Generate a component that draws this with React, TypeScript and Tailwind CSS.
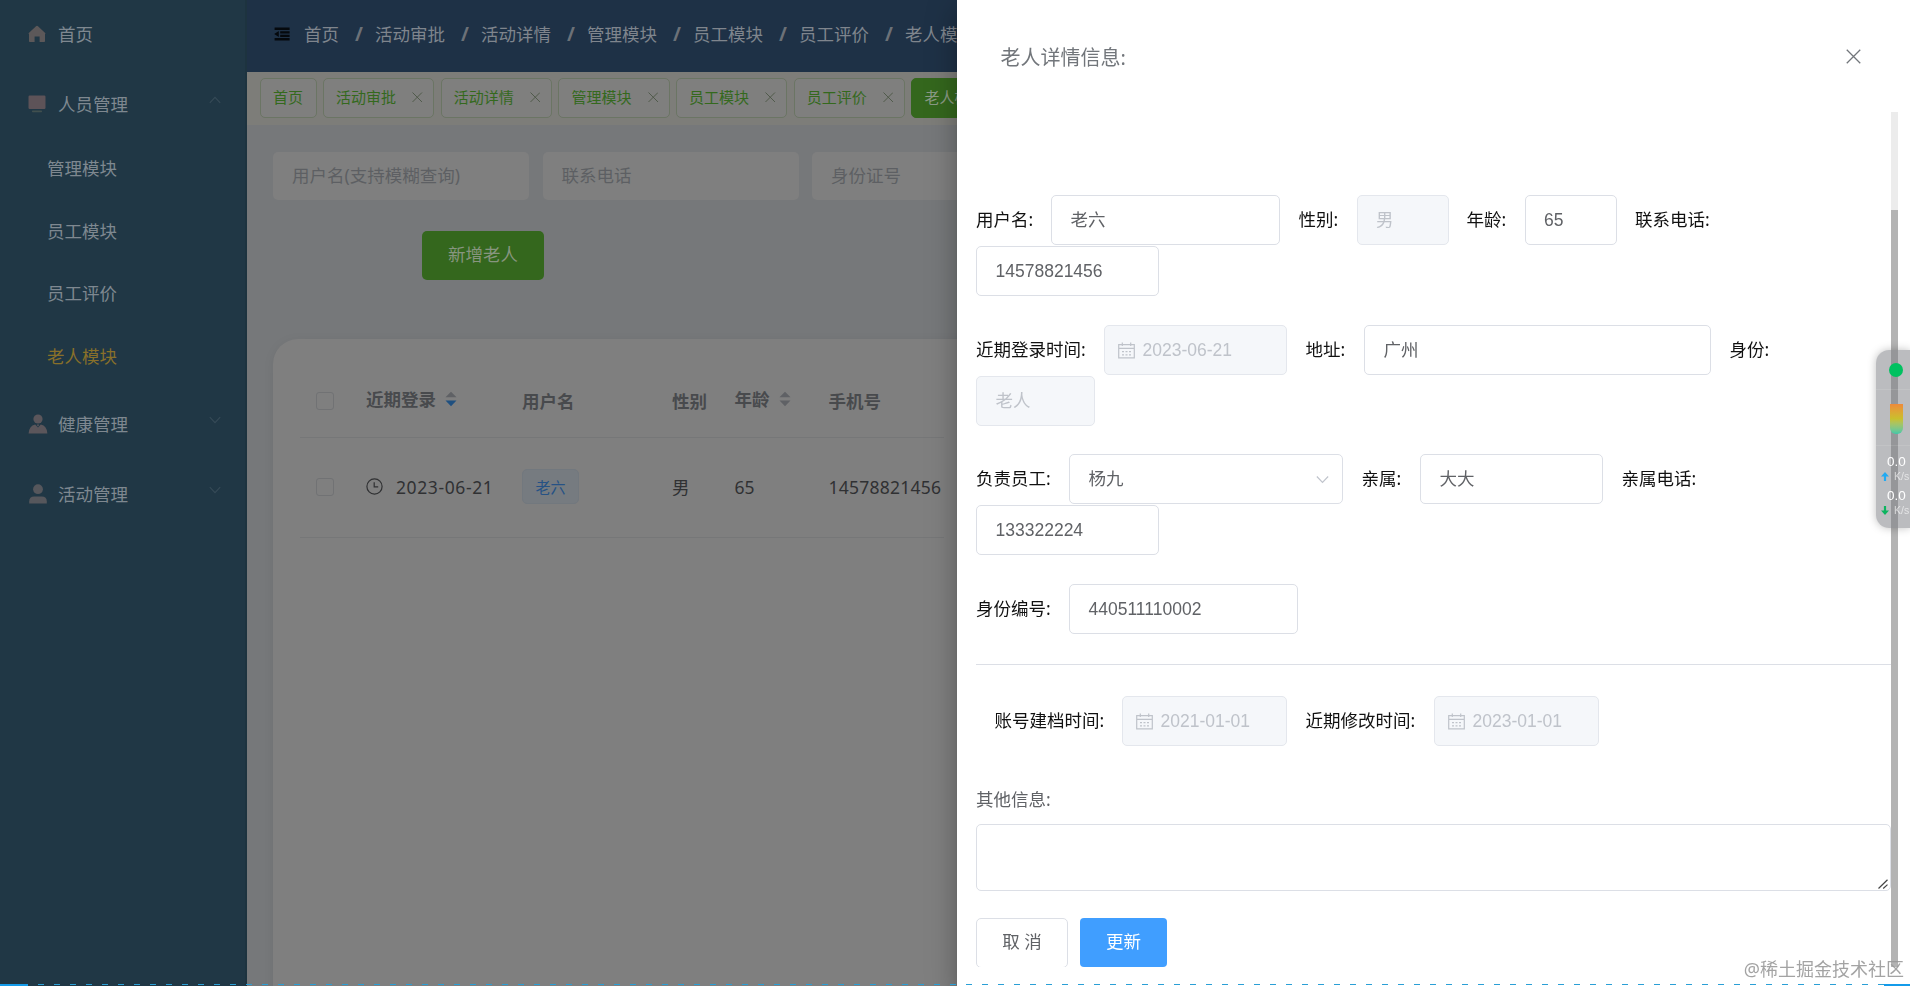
import type { ReactNode } from 'react';
import clsx from 'clsx';

const crumbs = ['首页', '活动审批', '活动详情', '管理模块', '员工模块', '员工评价', '老人模块'];

const ChevronIcon = ({ className }: { className?: string }) => (
  <svg viewBox="0 0 12 8" className={className} fill="none" stroke="currentColor" strokeWidth="1.1">
    <path d="M0.8 1.2 L6 6.6 L11.2 1.2" />
  </svg>
);

const CloseIcon = ({ className }: { className?: string }) => (
  <svg viewBox="0 0 16 16" className={className} fill="none" stroke="currentColor" strokeWidth="1.4">
    <path d="M0.8 0.8 L15.2 15.2 M15.2 0.8 L0.8 15.2" />
  </svg>
);

const CalendarIcon = () => (
  <svg viewBox="0 0 17 17" className="h-[17px] w-[17px] shrink-0" fill="none" stroke="currentColor" strokeWidth="1.2">
    <path d="M0.7 2.6 H16.3 V15.9 H0.7 Z M0.7 6.4 H16.3 M4.3 0.4 V4 M12.7 0.4 V4" />
    <path d="M4 9.6 H6 M7.5 9.6 H9.5 M11 9.6 H13 M4 12.8 H6 M7.5 12.8 H9.5 M11 12.8 H13" />
  </svg>
);

const HomeIcon = () => (
  <svg viewBox="0 0 18 18" className="h-[18px] w-[18px]" fill="currentColor">
    <path d="M9 0.8 Q9.6 0.8 10 1.3 L17.2 8 Q17.8 9 17 9.2 V16.2 Q17 17 16.2 17 H11.6 V11.4 H6.6 V17 H1.8 Q1 17 1 16.2 V9.2 Q0.2 9 0.8 8 L8 1.3 Q8.4 0.8 9 0.8 Z" />
  </svg>
);

const PlatformIcon = () => (
  <svg viewBox="0 0 18 18" className="h-[18px] w-[18px]" fill="currentColor">
    <rect x="0.5" y="0.5" width="17" height="13.4" rx="1.2" />
    <rect x="4" y="15.4" width="10" height="1.8" rx="0.6" className="text-[#41504f]" />
  </svg>
);

const CustomIcon = () => (
  <svg viewBox="0 0 20 20" className="h-5 w-5" fill="currentColor">
    <circle cx="10" cy="5" r="4.6" />
    <path d="M0.6 19.6 Q1 12 7.2 10.6 L10 13.6 L12.8 10.6 Q19 12 19.4 19.6 Z" />
    <path d="M9 10.6 H11 L10.6 12.2 H9.4 Z" />
  </svg>
);

const UserIcon = () => (
  <svg viewBox="0 0 20 20" className="h-5 w-5" fill="currentColor">
    <circle cx="10" cy="5.2" r="4.9" />
    <path d="M1.2 19.4 V17.4 Q1.2 12.4 6.2 12.4 H13.8 Q18.8 12.4 18.8 17.4 V19.4 Z" />
  </svg>
);

const SortIcon = ({ active }: { active?: boolean }) => (
  <svg viewBox="0 0 12 16" className="h-4 w-3">
    <path d="M0.5 6.2 L6 0.8 L11.5 6.2 Z" fill="#5f6165" />
    <path d="M0.5 9.4 L6 15.2 L11.5 9.4 Z" fill={active ? '#1f5080' : '#5f6165'} />
  </svg>
);

const menuRow = 'flex h-[70px] items-center pb-[2px] pl-[27px]';

const Sidebar = () => (
  <aside className="w-[247px] shrink-0 border-r-2 border-[#1d333f] bg-[#203745] text-[#7e8890]">
    <div className={menuRow}>
      <span className="flex w-[31px] pl-[1px] text-[#5c5859]"><HomeIcon /></span>
      首页
    </div>
    <div className={menuRow}>
      <span className="flex w-[31px] pl-[1px] text-[#5d5358]"><PlatformIcon /></span>
      人员管理
      <ChevronIcon className="-mt-2 ml-auto mr-[24px] h-2 w-3 rotate-180 text-[#364a57]" />
    </div>
    <ul className="h-[250px] pl-[47px]">
      {['管理模块', '员工模块', '员工评价', '老人模块'].map((name) => (
        <li
          key={name}
          className={clsx('flex h-[62.5px] items-center pb-[6px]', name === '老人模块' && 'text-[#88702a]')}
        >
          {name}
        </li>
      ))}
    </ul>
    <div className={menuRow}>
      <span className="flex w-[31px] pl-[1px] text-[#5b565b]"><CustomIcon /></span>
      健康管理
      <ChevronIcon className="-mt-2 ml-auto mr-[24px] h-2 w-3 text-[#364a57]" />
    </div>
    <div className={menuRow}>
      <span className="flex w-[31px] pl-[1px] text-[#56575c]"><UserIcon /></span>
      活动管理
      <ChevronIcon className="-mt-2 ml-auto mr-[24px] h-2 w-3 text-[#364a57]" />
    </div>
  </aside>
);

const Header = () => (
  <header className="flex h-[72px] items-center bg-[#1e3146] pb-[5px] pl-[27px] whitespace-nowrap text-[#7f858d]">
    <svg viewBox="0 0 16 14" className="h-[14px] w-4" fill="#05090d">
      <path d="M0.6 0.6 H15.6 V3 H0.6 Z M6.2 4.2 H15.6 V6.4 H6.2 Z M6.2 7.8 H15.6 V10 H6.2 Z M0.6 11 H15.6 V13.4 H0.6 Z M0.2 7 L4.8 4 V10 Z" />
    </svg>
    <div className="ml-[14px] flex items-center">
      {crumbs.map((name, i) => (
        <div key={name} className="flex items-center">
          {i > 0 && <span className="w-[36px] pl-1 text-center text-[19px] font-bold text-[#6c7178]">/</span>}
          {name}
        </div>
      ))}
    </div>
  </header>
);

const TagsBar = () => (
  <div className="flex h-[53px] gap-[6.5px] bg-[#7d7d79] pt-[6px] pl-[13px] text-[15px] whitespace-nowrap">
    {crumbs.map((name, i) => (
      <div
        key={name}
        className={clsx(
          'flex h-10 shrink-0 items-center rounded-[5px] border pb-[3px] pl-[12px]',
          i > 0 ? 'w-[111.2px]' : 'w-[56.5px]',
          name === '老人模块'
            ? 'border-[#34671d] bg-[#34671d] text-[#8b9a85]'
            : 'border-[#6b7564] bg-[#7f7f7e] text-[#34691d]'
        )}
      >
        {name}
        {i > 0 && <CloseIcon className="mt-[2px] mr-[10.5px] ml-auto h-[10.5px] w-[10.5px] text-[#4c5747]" />}
      </div>
    ))}
  </div>
);

const SearchBox = ({ text }: { text: string }) => (
  <div className="flex h-12 w-[256px] shrink-0 items-center rounded-[5px] bg-[#7f7f7f] pb-[2px] pl-[19px] text-[#5d5f63]">
    {text}
  </div>
);

const columns = 'grid grid-cols-[66px_156px_150px_62.5px_94px_115.5px] items-center';
const Checkbox = () => <span className="ml-4 h-[18px] w-[18px] rounded-[3px] border border-[#717274]" />;

const TableCard = () => (
  <section className="ml-[26px] mt-[59px] h-[700px] w-[1600px] rounded-[25px] bg-[#7f7f7f] pt-[25px] pl-[27px] shadow-[0_2px_12px_rgba(0,0,0,0.06)]">
    <div className="w-[644px]">
      <div className={clsx(columns, 'h-[74px] border-b border-[#767778] font-bold text-[#484a4d]')}>
        <Checkbox />
        <span className="flex items-center gap-[9px] pb-[4px]">近期登录<SortIcon active /></span>
        <span>用户名</span>
        <span>性别</span>
        <span className="flex items-center gap-[9px] pb-[4px]">年龄<SortIcon /></span>
        <span>手机号</span>
      </div>
      <div className={clsx(columns, 'h-[100px] border-b border-[#767778] pb-[2px] text-[#303133]')}>
        <Checkbox />
        <span className="flex items-center">
          <svg viewBox="0 0 17 17" className="mr-[13px] h-[17px] w-[17px]" fill="none" stroke="currentColor" strokeWidth="1.2">
            <circle cx="8.5" cy="8.5" r="7.6" />
            <path d="M8.2 4.2 V8.8 H12.2" />
          </svg>
          <span className="tracking-[0.6px]">2023-06-21</span>
        </span>
        <span className="flex h-[35px] w-[57px] items-center justify-center rounded-[5px] border border-[#72787e] bg-[#767b80] text-[15px] text-[#265285]">
          老六
        </span>
        <span>男</span>
        <span>65</span>
        <span className="tracking-[0.25px]">14578821456</span>
      </div>
    </div>
  </section>
);

const Label = ({ className, children }: { className: string; children: ReactNode }) => (
  <label className={clsx('shrink-0 text-[#111]', className)}>{children}</label>
);

interface FieldProps {
  className: string;
  disabled?: boolean;
  date?: boolean;
  children: ReactNode;
}

const Field = ({ className, disabled, date, children }: FieldProps) => (
  <div
    className={clsx(
      'flex h-[50px] shrink-0 items-center rounded-[5px] border font-["Liberation_Sans","Noto_Sans_CJK_SC",sans-serif]',
      disabled ? 'border-[#e4e7ed] bg-[#f5f7fa] text-[#bfc3ca]' : 'border-[#dcdfe6] bg-white text-[#606266]',
      date ? 'gap-[8px] pl-[12.5px]' : 'pl-[18.5px]',
      className
    )}
  >
    {date && <CalendarIcon />}
    {children}
  </div>
);

const Line = ({ children }: { children: ReactNode }) => (
  <div className="flex h-[51px] items-start leading-[48.5px]">{children}</div>
);

const Drawer = () => (
  <div className="fixed inset-y-0 right-0 w-[953px] bg-white shadow-[0_8px_10px_-5px_rgba(0,0,0,0.2),0_16px_24px_2px_rgba(0,0,0,0.14),0_6px_30px_5px_rgba(0,0,0,0.12)]">
    <div className="flex h-[112px] items-center justify-between pr-[49px] pl-[43.5px] text-xl text-[#72767b]">
      <span className="pt-[4px]">老人详情信息:</span>
      <CloseIcon className="h-[15px] w-[15px]" />
    </div>

    <div className="flex h-[855px] overflow-hidden">
      <div className="w-[934px] pt-[83px] pl-[19px] whitespace-nowrap">
        <div className="mb-[28px]">
          <Line>
            <Label className="w-[75px]">用户名:</Label>
            <Field className="w-[229px]">老六</Field>
            <Label className="ml-[18.5px] w-[58px]">性别:</Label>
            <Field className="w-[92px]" disabled>男</Field>
            <Label className="ml-[18px] w-[58px]">年龄:</Label>
            <Field className="w-[92px]">65</Field>
            <Label className="ml-[18.5px]">联系电话:</Label>
          </Line>
          <Line>
            <Field className="w-[183px]">14578821456</Field>
          </Line>
        </div>

        <div className="mb-[27px]">
          <Line>
            <Label className="w-[128px]">近期登录时间:</Label>
            <Field className="w-[183px]" disabled date>2023-06-21</Field>
            <Label className="ml-[18.5px] w-[58.5px]">地址:</Label>
            <Field className="w-[347px]">广州</Field>
            <Label className="ml-[18.5px]">身份:</Label>
          </Line>
          <Line>
            <Field className="w-[119px]" disabled>老人</Field>
          </Line>
        </div>

        <div className="mb-[28px]">
          <Line>
            <Label className="w-[93px]">负责员工:</Label>
            <Field className="w-[274px]">
              杨九
              <ChevronIcon className="mr-[13px] ml-auto h-[9px] w-[13px] text-[#c0c4cc]" />
            </Field>
            <Label className="ml-[18.5px] w-[58.5px]">亲属:</Label>
            <Field className="w-[183px]">大大</Field>
            <Label className="ml-[18.5px]">亲属电话:</Label>
          </Line>
          <Line>
            <Field className="w-[183px]">133322224</Field>
          </Line>
        </div>

        <Line>
          <Label className="w-[93px]">身份编号:</Label>
          <Field className="w-[229px]">440511110002</Field>
        </Line>

        <hr className="mt-[29px] mb-[31px] border-[#dcdfe6]" />

        <div className="pl-[18.5px]">
          <Line>
            <Label className="w-[127.5px]">账号建档时间:</Label>
            <Field className="w-[165px]" disabled date>2021-01-01</Field>
            <Label className="ml-[18.5px] w-[128.5px]">近期修改时间:</Label>
            <Field className="w-[165px]" disabled date>2023-01-01</Field>
          </Line>
        </div>

        <div className="mt-[28px] h-[49px] leading-[49px] text-[#606266]">其他信息:</div>
        <div className="flex h-[67px] items-end justify-end rounded-[5px] border border-[#dcdfe6]">
          <svg viewBox="0 0 10 10" className="mr-[2px] mb-[1px] h-[10px] w-[10px]" stroke="#444" strokeWidth="1.2">
            <path d="M0.5 9.5 L9.5 0.8 M5.2 9.5 L9.5 5.6" />
          </svg>
        </div>

        <div className="mt-[27px] flex gap-3">
          <button className="h-[50px] w-[92px] rounded-[5px] border border-[#dcdfe6] pb-[4px] text-[#606266]">取 消</button>
          <button className="h-[49px] w-[87px] rounded-[4px] bg-[#409eff] pb-[3px] text-white">更新</button>
        </div>
      </div>
      {/* scrollbar */}
      <div className="w-[7px] bg-[#ececec] pt-[98px]">
        <div className="h-full bg-[#b3b3b3]" />
      </div>
    </div>
  </div>
);

// desktop network speed widget docked to the right edge
const SpeedWidget = () => (
  <div className='fixed top-[350px] right-0 h-[178px] w-[34px] overflow-hidden rounded-l-[13px] bg-[#777a80]/50 font-["Liberation_Sans",sans-serif] text-white shadow-[0_0_8px_rgba(0,0,0,0.25)]'>
    <div className="flex h-10 items-center border-b border-white/10 pl-[13px]">
      <span className="h-[14px] w-[14px] rounded-full bg-[#00c160]" />
    </div>
    <div className="h-14 border-b border-white/10 pt-[14px] pl-[14px]">
      <div className="h-[30px] w-[13px] rounded-b-[6px] bg-linear-to-b from-[#ee8a3a] via-[#c8c02c] to-[#3cc8a8]" />
    </div>
    {['up', 'down'].map((dir) => (
      <div key={dir} className="h-[34px] pt-[8px] whitespace-nowrap">
        <div className="pl-[11px] text-[13.5px] leading-4">0.0</div>
        <div className="flex items-center gap-[5px] pl-[5px] text-[10.5px] leading-[13px] text-white/60">
          <svg
            viewBox="0 0 8 9"
            className={clsx('h-[9px] w-2 shrink-0', dir === 'up' ? 'text-[#22aaf2]' : 'rotate-180 text-[#0cb45f]')}
            fill="currentColor"
          >
            <path d="M4 0 L8 4.6 H5.1 V9 H2.9 V4.6 H0 Z" />
          </svg>
          K/s
        </div>
      </div>
    ))}
  </div>
);

const App = () => {
  return (
    <div className='flex h-[986px] w-[1910px] overflow-hidden bg-[#76787a] font-["Noto_Sans","Noto_Sans_CJK_SC",sans-serif] text-[17.5px] leading-[24px]'>
      <Sidebar />
      <main className="min-w-0 flex-1 overflow-hidden">
        <Header />
        <TagsBar />
        <div className="mt-[27px] flex gap-[13.5px] pl-[26px]">
          <SearchBox text="用户名(支持模糊查询)" />
          <SearchBox text="联系电话" />
          <SearchBox text="身份证号" />
        </div>
        <button className="mt-[31px] ml-[175px] block h-[49px] w-[122px] rounded-[5px] bg-[#34671d] pb-[3px] text-[#87957f]">
          新增老人
        </button>
        <TableCard />
      </main>

      <Drawer />
      <SpeedWidget />

      <div className="fixed right-[6px] bottom-[5px] text-[18px] leading-[24px] text-[#999]/90">@稀土掘金技术社区</div>

      {/* dashed guide along the bottom edge */}
      <div className="fixed inset-x-0 bottom-0 flex h-[2px]">
        <span className="w-[28px] bg-[#149bea]" />
        <span className="mb-[1px] flex-1 bg-[repeating-linear-gradient(90deg,transparent_0_10px,#2a9fd6_10px_16px)]" />
        <span className="w-[26px] bg-[#149bea]" />
      </div>
    </div>
  );
};

export default App;
